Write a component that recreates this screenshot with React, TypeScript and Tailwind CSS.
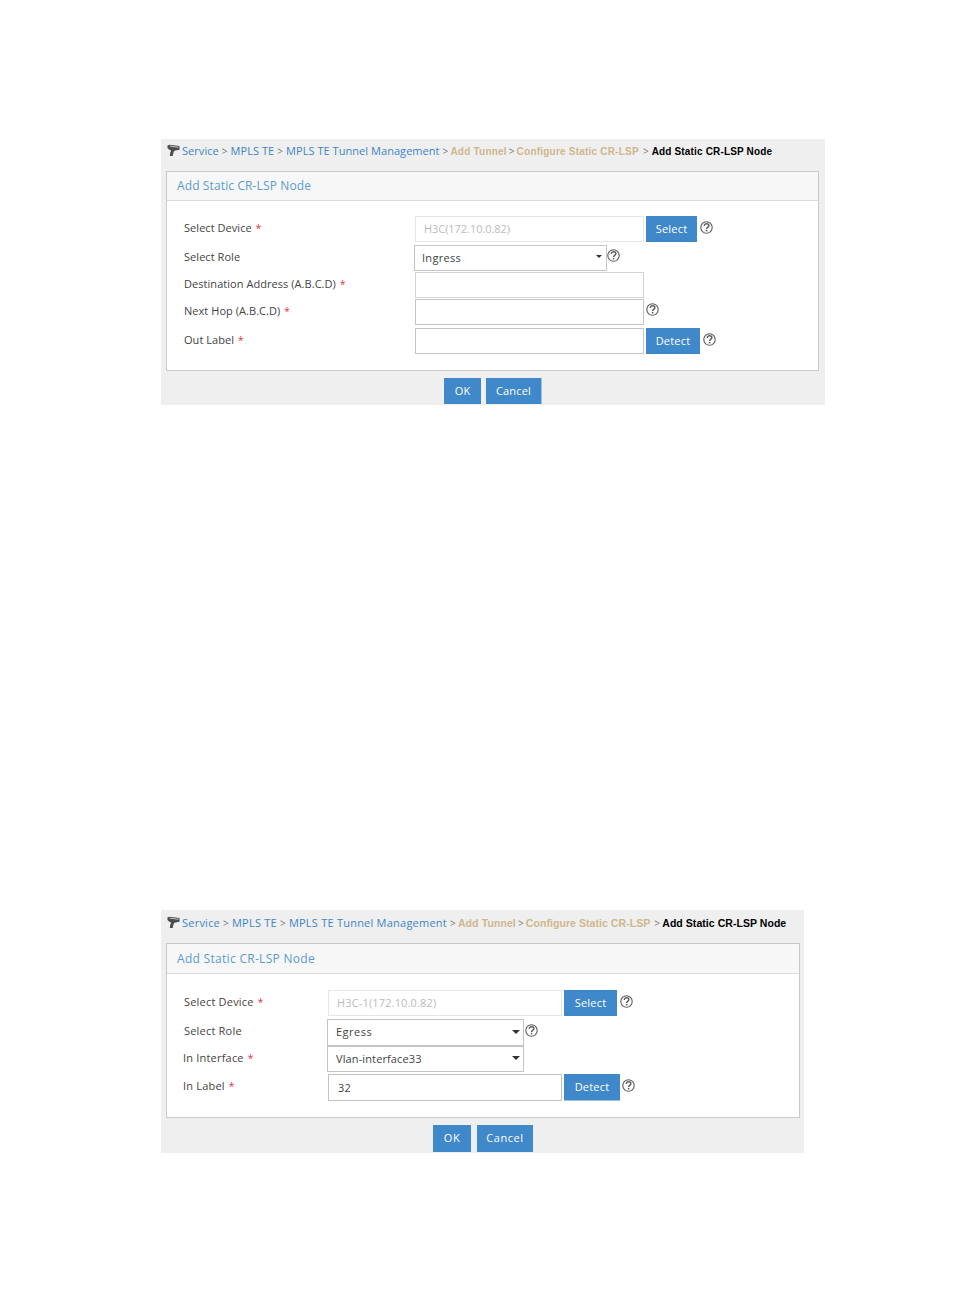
import React from "react";

const BODY = "font-['Open_Sans','Liberation_Sans',sans-serif]";

function Camera() {
  return (
    <svg width="13" height="13" viewBox="0 0 14 13" className="shrink-0">
      <path d="M0.5 1 L2.5 0.3 L13.5 1.6 L13.5 5.6 L9 6.4 L7.5 7.4 L6.6 10 L6.2 12.5 L3 12.5 L3.6 8.4 L4.5 6.4 L2.5 5.8 L0.5 3.8 Z" fill="#4d4d4d" />
      <path d="M3 1.8 L12.5 3" stroke="#d8d8d8" strokeWidth="0.9" fill="none" />
    </svg>
  );
}

function Help({ className }: { className: string }) {
  return (
    <svg width="13" height="13" viewBox="0 0 13 13" className={"shrink-0 " + className}>
      <circle cx="6.5" cy="6.5" r="5.7" fill="none" stroke="#5c5c5c" strokeWidth="1.1" />
      <path d="M4.3 5 C4.3 3.3 5.5 2.7 6.6 2.7 C8 2.7 8.9 3.6 8.9 4.7 C8.9 6.1 6.6 6.2 6.6 8" fill="none" stroke="#5c5c5c" strokeWidth="1.4" />
      <rect x="5.8" y="8.9" width="1.6" height="1.5" fill="#5c5c5c" />
    </svg>
  );
}

function Sep({ className = "" }: { className?: string }) {
  return <span className={"text-[#777] text-[10px] " + className}>&gt;</span>;
}

function Star() {
  return <span className="text-[#e0323c] text-[10px] ml-[4px]">*</span>;
}

export default function App() {
  return (
    <div className={"w-[954px] h-[1296px] bg-white pt-[139px] pl-[161px] " + BODY}>
      {/* first panel */}
      <section className="w-[664px] h-[266px] bg-[#efefef] pl-[5px]">
        <div className="h-[32px] flex items-start pt-[5px] pl-[1px] text-[11px] whitespace-nowrap">
          <Camera />
          <div className="ml-[2px] flex items-center h-[14px] text-[#3d85c6] tracking-[0.05px]">
            <span>Service</span>
            <Sep className="mx-[3px]" />
            <span>MPLS TE</span>
            <Sep className="mx-[3px]" />
            <span>MPLS TE Tunnel Management</span>
            <Sep className="ml-[3px] mr-[2px]" />
            <span className="font-['Liberation_Sans'] font-bold text-[10px] tracking-[0.22px] text-[#cfb68e]">Add Tunnel</span>
            <Sep className="mx-[2px]" />
            <span className="font-['Liberation_Sans'] font-bold text-[10px] tracking-[0.22px] text-[#cfb68e]">Configure Static CR-LSP</span>
            <Sep className="ml-[4px] mr-[3px]" />
            <span className="font-['Liberation_Sans'] font-bold text-[10px] tracking-[0.16px] text-black">Add Static CR-LSP Node</span>
          </div>
        </div>
        <div className="w-[653px] h-[200px] border border-[#c9c9c9] bg-white">
          <div className="h-[29px] bg-[#f7f7f7] border-b border-[#dcdcdc] pl-[10px] flex items-center text-[12px] tracking-[0.12px] text-[#5b9bcf]">Add Static CR-LSP Node</div>
          <div className="pt-[15px] pl-[17px] text-[11px] tracking-[0.05px] text-[#444]">
            <div className="flex items-center h-[26px]">
              <span className="w-[231px] pb-[2px]">Select Device<Star /></span>
              <input readOnly value="H3C(172.10.0.82)" className="w-[229px] h-[26px] border border-[#e6e6e6] px-[8px] pb-[2px] text-[#bbb] tracking-[-0.05px] outline-none" />
              <button className="ml-[2px] w-[51px] h-[26px] bg-[#3f88ca] text-white tracking-[0.2px]">Select</button>
              <Help className="ml-[3px] mb-[3px]" />
            </div>
            <div className="flex items-center h-[26px] mt-[3px]">
              <span className="w-[230px] pb-[2px]">Select Role</span>
              <div className="relative w-[193px] h-[26px] border border-[#c4c4c4] pl-[7px] flex items-center tracking-[0.3px]">
                Ingress
                <span className="absolute right-[4px] top-[9px] w-0 h-0 border-x-[3px] border-x-transparent border-t-[3px] border-t-[#333]" />
              </div>
              <Help className="mb-[5px]" />
            </div>
            <div className="flex items-center h-[26px] mt-[1px]">
              <span className="w-[231px] pb-[2px]">Destination Address (A.B.C.D)<Star /></span>
              <input readOnly className="w-[229px] h-[26px] border border-[#d4d4d4] outline-none" />
            </div>
            <div className="flex items-center h-[26px] mt-[1px]">
              <span className="w-[231px] pb-[2px]">Next Hop (A.B.C.D)<Star /></span>
              <input readOnly className="w-[229px] h-[26px] border border-[#c4c4c4] outline-none" />
              <Help className="ml-[2px] mb-[5px]" />
            </div>
            <div className="flex items-center h-[26px] mt-[3px]">
              <span className="w-[231px] pb-[2px]">Out Label<Star /></span>
              <input readOnly className="w-[229px] h-[26px] border border-[#c4c4c4] outline-none" />
              <button className="ml-[2px] w-[54px] h-[26px] bg-[#3f88ca] text-white tracking-[0.2px]">Detect</button>
              <Help className="ml-[3px] mb-[4px]" />
            </div>
          </div>
        </div>
        <div className="flex pt-[7px] pl-[278px] text-[11px] tracking-[0.2px] text-white">
          <button className="w-[37px] h-[26px] bg-[#3f88ca]">OK</button>
          <button className="ml-[5px] w-[56px] h-[26px] bg-[#3f88ca] border-r border-[#9cc3e6]">Cancel</button>
        </div>
      </section>

      {/* second panel */}
      <section className="mt-[505px] w-[643px] h-[243px] bg-[#efefef] pl-[5px]">
        <div className="h-[33px] flex items-start pt-[6px] pl-[1px] text-[11px] whitespace-nowrap">
          <Camera />
          <div className="ml-[2px] flex items-center h-[14px] text-[#3d85c6] tracking-[0.23px]">
            <span>Service</span>
            <Sep className="mx-[3px]" />
            <span>MPLS TE</span>
            <Sep className="mx-[3px]" />
            <span>MPLS TE Tunnel Management</span>
            <Sep className="ml-[3px] mr-[2px]" />
            <span className="font-['Liberation_Sans'] font-bold text-[10.5px] tracking-[0.1px] mt-[1px] text-[#cfb68e]">Add Tunnel</span>
            <Sep className="mx-[2px]" />
            <span className="font-['Liberation_Sans'] font-bold text-[10.5px] tracking-[0.06px] mt-[1px] text-[#cfb68e]">Configure Static CR-LSP</span>
            <Sep className="ml-[4px] mr-[2px]" />
            <span className="font-['Liberation_Sans'] font-bold text-[10.5px] tracking-[0.05px] mt-[1px] text-black">Add Static CR-LSP Node</span>
          </div>
        </div>
        <div className="w-[634px] h-[175px] border border-[#c9c9c9] bg-white">
          <div className="h-[30px] bg-[#f7f7f7] border-b border-[#dcdcdc] pl-[10px] flex items-center text-[12px] tracking-[0.3px] text-[#5b9bcf]">Add Static CR-LSP Node</div>
          <div className="pt-[16px] pl-[17px] text-[11px] tracking-[0.2px] text-[#444]">
            <div className="flex items-center h-[26px]">
              <span className="w-[144px] pb-[2px]">Select Device<Star /></span>
              <input readOnly value="H3C-1(172.10.0.82)" className="w-[234px] h-[26px] border border-[#e6e6e6] px-[8px] pb-[1px] text-[#bbb] tracking-[0.15px] outline-none" />
              <button className="ml-[2px] w-[53px] h-[26px] bg-[#3f88ca] text-white">Select</button>
              <Help className="ml-[3px] mb-[3px]" />
            </div>
            <div className="flex items-center h-[27px] mt-[3px]">
              <span className="w-[143px] pb-[2px]">Select Role</span>
              <div className="relative w-[197px] h-[27px] border border-[#c4c4c4] pl-[8px] flex items-center tracking-[0.5px]">
                Egress
                <span className="absolute right-[3px] top-[10px] w-0 h-0 border-x-[4px] border-x-transparent border-t-[4px] border-t-[#333]" />
              </div>
              <Help className="ml-[1px] mb-[5px]" />
            </div>
            <div className="flex items-center h-[26px]">
              <span className="w-[144px] pb-[2px] -ml-px">In Interface<Star /></span>
              <div className="relative w-[197px] h-[26px] border border-[#c4c4c4] pl-[8px] flex items-center tracking-[0.12px]">
                Vlan-interface33
                <span className="absolute right-[3px] top-[9px] w-0 h-0 border-x-[4px] border-x-transparent border-t-[4px] border-t-[#333]" />
              </div>
            </div>
            <div className="flex items-center h-[27px] mt-[2px]">
              <span className="w-[145px] pb-[2px] -ml-px">In Label<Star /></span>
              <input readOnly value="32" className="w-[234px] h-[27px] border border-[#c4c4c4] px-[9px] pb-[1px] text-[#444] outline-none" />
              <button className="ml-[2px] w-[56px] h-[27px] bg-[#3f88ca] border-b border-[#9cc3e6] text-white">Detect</button>
              <Help className="ml-[2px] mb-[5px]" />
            </div>
          </div>
        </div>
        <div className="flex pt-[7px] pl-[267px] text-[11px] tracking-[0.55px] text-white">
          <button className="w-[38px] h-[27px] bg-[#3f88ca]">OK</button>
          <button className="ml-[6px] w-[56px] h-[27px] bg-[#3f88ca]">Cancel</button>
        </div>
      </section>
    </div>
  );
}
